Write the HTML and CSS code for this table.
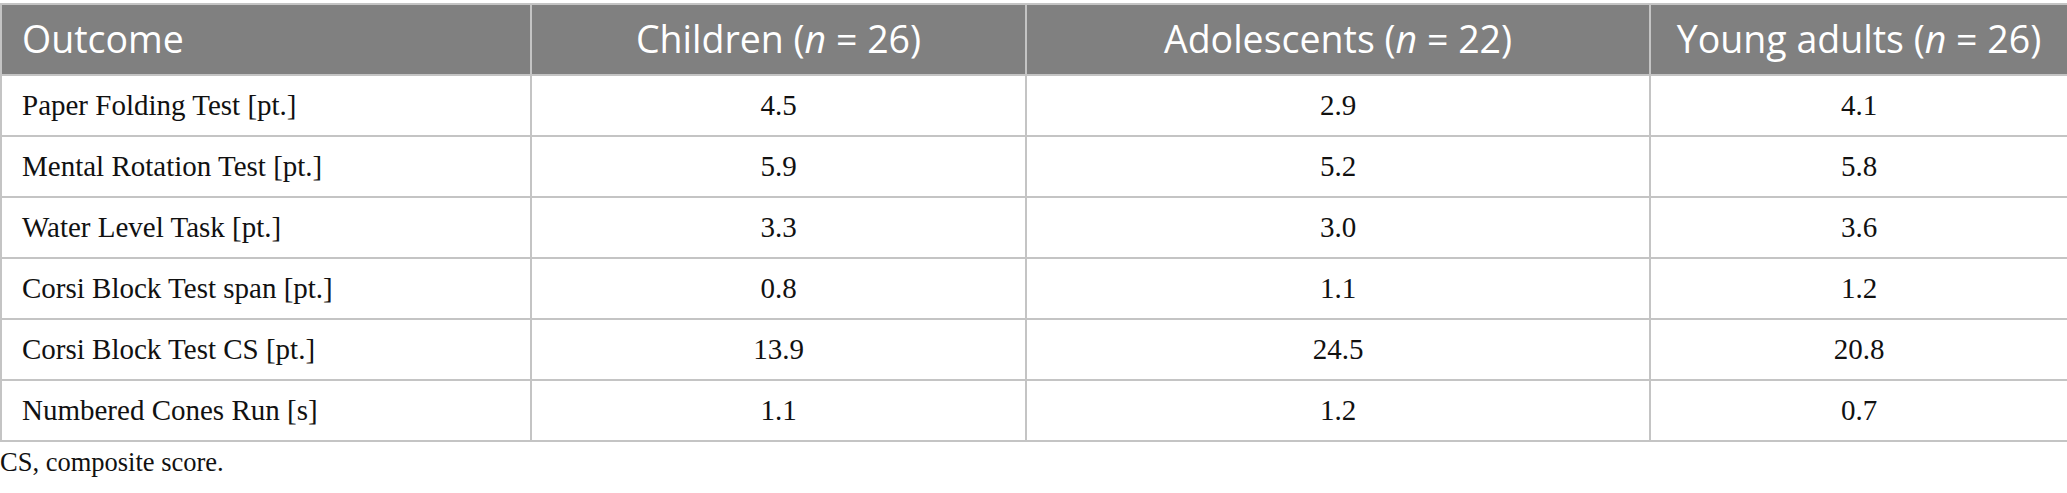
FILE: index.html
```html
<!DOCTYPE html>
<html lang="en">
<head>
<meta charset="utf-8">
<title>Outcome table</title>
<link rel="stylesheet" href="styles.css">
</head>
<body>
<div class="page">
  <table class="data">
    <colgroup>
      <col class="c1">
      <col class="c2">
      <col class="c3">
      <col class="c4">
    </colgroup>
    <thead>
      <tr>
        <th class="first">Outcome</th>
        <th>Children (<i>n</i> = 26)</th>
        <th>Adolescents (<i>n</i> = 22)</th>
        <th>Young adults (<i>n</i> = 26)</th>
      </tr>
    </thead>
    <tbody>
      <tr><td class="first">Paper Folding Test [pt.]</td><td>4.5</td><td>2.9</td><td>4.1</td></tr>
      <tr><td class="first">Mental Rotation Test [pt.]</td><td>5.9</td><td>5.2</td><td>5.8</td></tr>
      <tr><td class="first">Water Level Task [pt.]</td><td>3.3</td><td>3.0</td><td>3.6</td></tr>
      <tr><td class="first">Corsi Block Test span [pt.]</td><td>0.8</td><td>1.1</td><td>1.2</td></tr>
      <tr><td class="first">Corsi Block Test CS [pt.]</td><td>13.9</td><td>24.5</td><td>20.8</td></tr>
      <tr><td class="first">Numbered Cones Run [s]</td><td>1.1</td><td>1.2</td><td>0.7</td></tr>
    </tbody>
  </table>
  <p class="note">CS, composite score.</p>
</div>
</body>
</html>
```

FILE: styles.css
```css
html, body {
  margin: 0;
  padding: 0;
  background: #ffffff;
}

.page {
  padding-top: 3px;
}

.data {
  width: 2067px;
  border-collapse: collapse;
  table-layout: fixed;
}

.c1 { width: 530px; }
.c2 { width: 495px; }
.c3 { width: 624px; }
.c4 { width: 418px; }

.data th,
.data td {
  border: 2px solid #c4c4c4;
  text-align: center;
  vertical-align: middle;
  padding: 0 20px;
  white-space: nowrap;
}

.data th {
  background: #808080;
  color: #ffffff;
  font-family: "Open Sans", "DejaVu Sans", sans-serif;
  font-weight: 400;
  font-size: 37.5px;
  height: 67px;
  padding-bottom: 2px;
}

.data th i {
  font-style: italic;
}

.data td {
  font-family: "Liberation Serif", "Times New Roman", serif;
  font-size: 29px;
  color: #111111;
  height: 59px;
}

.data .first {
  text-align: left;
}

.note {
  margin: 5px 0 0 0;
  font-family: "Liberation Serif", "Times New Roman", serif;
  font-size: 26.5px;
  color: #111111;
}
```
